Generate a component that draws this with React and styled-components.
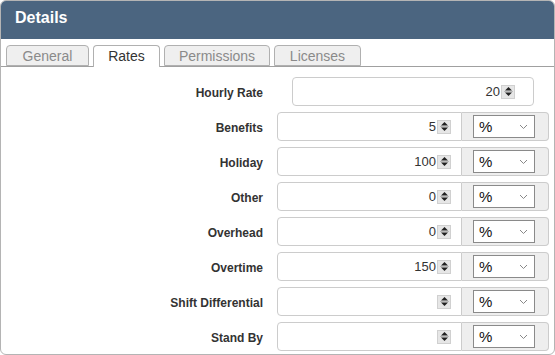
import React from "react";
import styled, { createGlobalStyle } from "styled-components";

const GlobalStyle = createGlobalStyle`
  html, body {
    margin: 0;
    padding: 0;
    background: #fff;
    font-family: "Liberation Sans", Arial, sans-serif;
  }
  * { box-sizing: border-box; }
`;

const rows = [
  { label: "Benefits", value: "5" },
  { label: "Holiday", value: "100" },
  { label: "Other", value: "0" },
  { label: "Overhead", value: "0" },
  { label: "Overtime", value: "150" },
  { label: "Shift Differential", value: "" },
  { label: "Stand By", value: "" },
];

const tabs = [
  { name: "General", width: 83 },
  { name: "Rates", width: 67 },
  { name: "Permissions", width: 106 },
  { name: "Licenses", width: 87 },
];

function Spinner() {
  return (
    <SpinBox>
      <svg width="9" height="11" viewBox="0 0 9 11">
        <path d="M4.5 1 L8 4.5 H1 Z" fill="#222" />
        <rect x="0" y="5" width="9" height="1" fill="#bbb" />
        <path d="M1 6.5 H8 L4.5 10 Z" fill="#222" />
      </svg>
    </SpinBox>
  );
}

function Chevron() {
  return (
    <svg width="9" height="6" viewBox="0 0 9 6">
      <path d="M1 1 L4.5 4.5 L8 1" fill="none" stroke="#888" strokeWidth="1" />
    </svg>
  );
}

export default function App() {
  return (
    <Panel>
      <GlobalStyle />
      <Header>Details</Header>
      <TabBar>
        {tabs.map((t) => (
          <Tab key={t.name} $width={t.width} $active={t.name === "Rates"}>
            {t.name}
          </Tab>
        ))}
      </TabBar>
      <Form>
        <Row>
          <Label>Hourly Rate</Label>
          <Narrow>
            <Field>
              <Value>20</Value>
              <Spinner />
            </Field>
          </Narrow>
        </Row>
        {rows.map((r) => (
          <Row key={r.label}>
            <Label>{r.label}</Label>
            <Group>
              <GroupInput>
                <Value>{r.value}</Value>
                <Spinner />
              </GroupInput>
              <Addon>
                <Select>
                  <span>%</span>
                  <Chevron />
                </Select>
              </Addon>
            </Group>
          </Row>
        ))}
      </Form>
    </Panel>
  );
}

const Panel = styled.div`
  width: 555px;
  height: 355px;
  border: 1px solid #b4b4b4;
  border-radius: 6px;
  overflow: hidden;
  display: flex;
  flex-direction: column;
`;

const Header = styled.div`
  height: 39px;
  flex: none;
  background: #4b6580;
  color: #fff;
  font-weight: bold;
  font-size: 16px;
  padding: 9px 0 0 15px;
  margin: -1px -1px 0 -1px;
`;

const TabBar = styled.div`
  display: flex;
  gap: 4px;
  padding: 6px 0 0 5px;
  border-bottom: 1px solid #a0a0a0;
  height: 28px;
  flex: none;
`;

const Tab = styled.div`
  width: ${(p) => p.$width}px;
  height: ${(p) => (p.$active ? "22px" : "21px")};
  margin-bottom: ${(p) => (p.$active ? "-1px" : "0")};
  padding-top: 2px;
  text-align: center;
  border: 1px solid #b0b0b0;
  border-bottom: ${(p) => (p.$active ? "none" : "1px solid #b0b0b0")};
  border-radius: 4px 4px 0 0;
  background: ${(p) => (p.$active ? "#fff" : "#efefef")};
  color: ${(p) => (p.$active ? "#333" : "#8a8a8a")};
  font-size: 14px;
  line-height: 17px;
`;

const Form = styled.div`
  display: flex;
  flex-direction: column;
  gap: 6px;
  padding-top: 10px;
`;

const Row = styled.div`
  display: grid;
  grid-template-columns: 262px 272px;
  column-gap: 14px;
  align-items: center;
  height: 29px;
`;

const Label = styled.div`
  text-align: right;
  font-size: 12px;
  font-weight: bold;
  color: #333;
  padding-top: 2px;
`;

const Narrow = styled.div`
  padding: 0 15px;
`;

const Field = styled.div`
  height: 29px;
  border: 1px solid #ccc;
  border-radius: 4px;
  display: flex;
  align-items: center;
  justify-content: flex-end;
  padding-right: 18px;
  background: #fff;
`;

const Value = styled.span`
  font-size: 13px;
  color: #333;
`;

const SpinBox = styled.span`
  width: 14px;
  height: 14px;
  background: #e6e6e6;
  border: 1px solid #d0d0d0;
  display: inline-flex;
  align-items: center;
  justify-content: center;
  margin-left: 1px;
`;

const Group = styled.div`
  display: flex;
  height: 29px;
`;

const GroupInput = styled.div`
  flex: 1;
  border: 1px solid #ccc;
  border-radius: 4px 0 0 4px;
  display: flex;
  align-items: center;
  justify-content: flex-end;
  padding-right: 10px;
`;

const Addon = styled.div`
  width: 87px;
  background: #eee;
  border: 1px solid #ccc;
  border-left: none;
  border-radius: 0 4px 4px 0;
  display: flex;
  align-items: center;
  padding-left: 11px;
`;

const Select = styled.div`
  width: 62px;
  height: 23px;
  background: #fff;
  border: 1px solid #8a8a8a;
  display: flex;
  align-items: center;
  justify-content: space-between;
  padding: 0 6px 0 5px;
  font-size: 15px;
  color: #111;
`;
